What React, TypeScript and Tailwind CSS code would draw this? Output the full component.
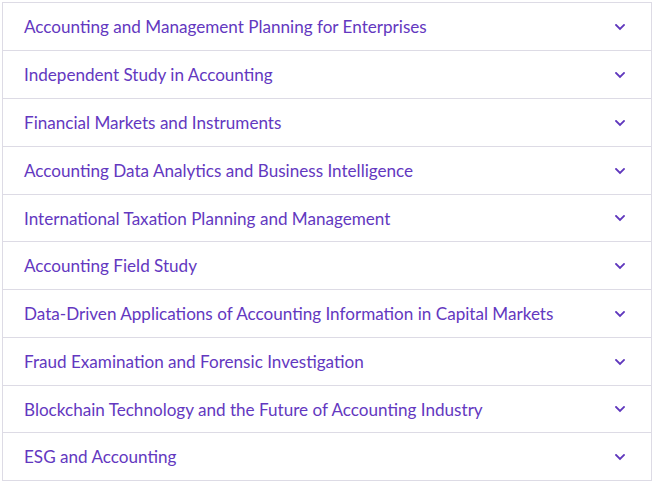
import React from "react";

const items: [string, boolean][] = [
  ["Accounting and Management Planning for Enterprises", false],
  ["Independent Study in Accounting", false],
  ["Financial Markets and Instruments", false],
  ["Accounting Data Analytics and Business Intelligence", false],
  ["International Taxation Planning and Management", true],
  ["Accounting Field Study", false],
  ["Data-Driven Applications of Accounting Information in Capital Markets", false],
  ["Fraud Examination and Forensic Investigation", false],
  ["Blockchain Technology and the Future of Accounting Industry", true],
  ["ESG and Accounting", false],
];

function Chevron() {
  return (
    <svg width="10" height="7" viewBox="0 0 10 7" fill="none">
      <path d="M1 1 L5 5 L9 1" stroke="#5f37bd" strokeWidth="1.8" strokeLinecap="square" />
    </svg>
  );
}

export default function App() {
  return (
    <div className="w-[655px] h-[483px] bg-white pt-[2px] pl-[2px]" style={{ fontFamily: "Lato, 'Open Sans', sans-serif" }}>
      <div className="w-[650px] border border-[#dddbe5] border-b-0 flex flex-col">
        {items.map(([t, short], i) => (
          <div
            key={i}
            className={`flex items-center justify-between border-b border-[#dddbe5] pl-[21px] pr-[26px] ${short ? "h-[47px]" : "h-[48px]"}`}
          >
            <span className="text-[17.1px] text-[#6338c0] leading-none pt-[1px]">{t}</span>
            <span className="pt-[1px]"><Chevron /></span>
          </div>
        ))}
      </div>
    </div>
  );
}
